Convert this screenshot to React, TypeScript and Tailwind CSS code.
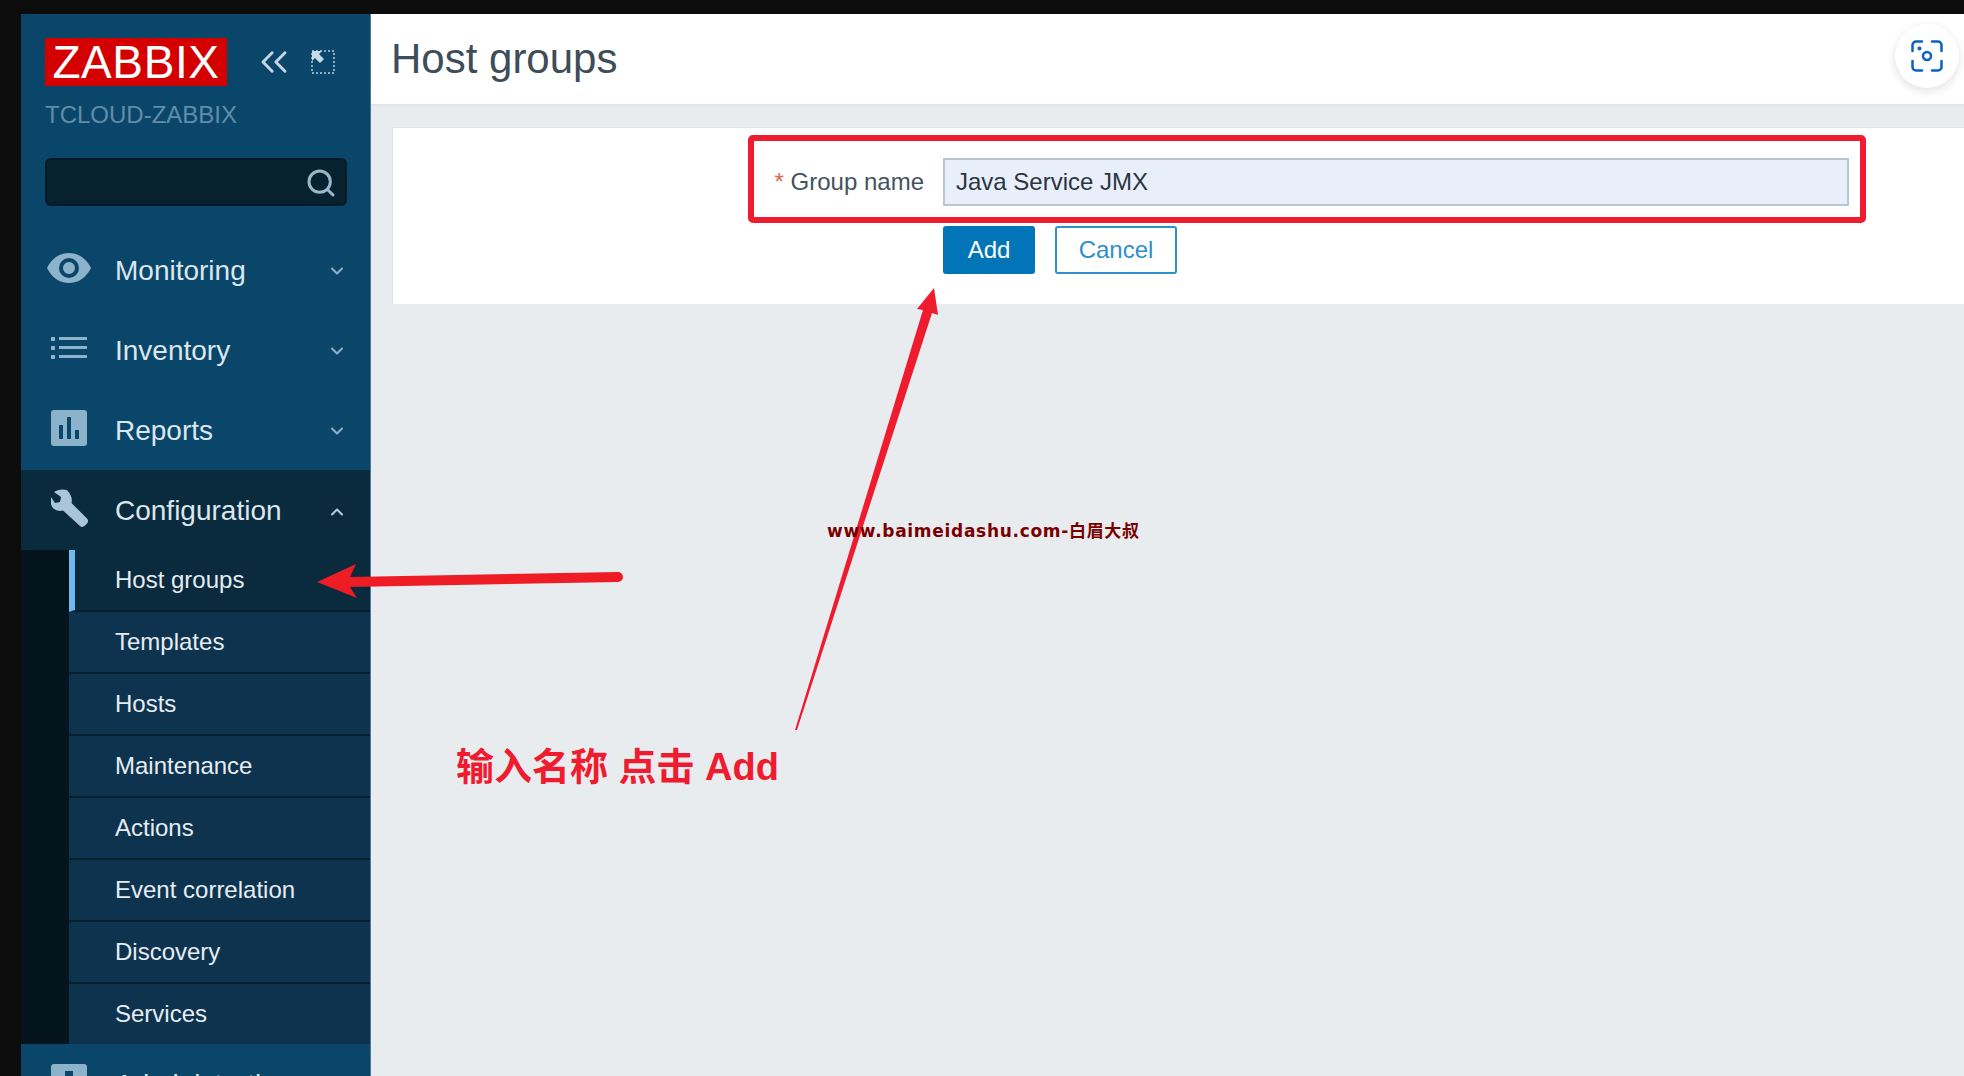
import { ChevronDown, ChevronUp, ChevronsLeft, Search } from "lucide-react";

const sans = "font-['Liberation_Sans',Arial,sans-serif]";

function EyeIcon() {
  return (
    <svg width="44" height="32" viewBox="0 0 44 32" className="text-[#8db3cb]">
      <path
        fill="currentColor"
        fillRule="evenodd"
        d="M0 16C5 6 13 1 22 1s17 5 22 15c-5 10-13 15-22 15S5 26 0 16zm22-10a10 10 0 1 0 0 20 10 10 0 0 0 0-20zm0 4a6 6 0 1 1 0 12 6 6 0 0 1 0-12z"
      />
    </svg>
  );
}

function ListIcon() {
  return (
    <svg width="36" height="22" viewBox="0 0 36 22" className="text-[#8db3cb]">
      <path
        fill="currentColor"
        d="M0 0h4v4H0zM8 0h28v3H8zM0 9h4v4H0zM8 9h28v3H8zM0 18h4v4H0zM8 18h28v3H8z"
      />
    </svg>
  );
}

function ReportIcon() {
  return (
    <svg width="36" height="36" viewBox="0 0 36 36" className="text-[#8db3cb]">
      <path
        fill="currentColor"
        fillRule="evenodd"
        d="M3 0h30a3 3 0 0 1 3 3v30a3 3 0 0 1-3 3H3a3 3 0 0 1-3-3V3a3 3 0 0 1 3-3zm5 15v14h4V15zm8-8v22h4V7zm8 13v9h4v-9z"
      />
    </svg>
  );
}

function WrenchIcon() {
  return (
    <svg width="38" height="38" viewBox="0 0 38 38" className="text-[#a8c6d8]">
      <path
        fill="currentColor"
        d="M16 1c-5-1.500-10 0-13 2l7 5-1 5-5 1-4-6c-1 4-.5 8 2 11 3 3 7 3.500 10 2.500L29 37c1.500 1.500 3.500 1 5-.5l2-2c1.500-1.500 1.500-3.500 0-5L20.500 14c1-4 0-8-4.500-13z"
      />
    </svg>
  );
}

function AdminIcon() {
  return (
    <svg width="36" height="36" viewBox="0 0 36 36" className="text-[#8db3cb]">
      <path
        fill="currentColor"
        fillRule="evenodd"
        d="M3 0h30a3 3 0 0 1 3 3v30a3 3 0 0 1-3 3H3a3 3 0 0 1-3-3V3a3 3 0 0 1 3-3zm11 7v5H6v18h24V12h-8V7z"
      />
    </svg>
  );
}

function ExpandIcon() {
  return (
    <svg width="24" height="24" viewBox="0 0 24 24">
      <rect x="1" y="1" width="22" height="22" fill="none" stroke="#b9cfdd" strokeWidth="1.500" strokeDasharray="2 2" />
      <path fill="#c8dae6" d="M1 1h10L8 4l5 5-4 4-5-5-3 3z" />
    </svg>
  );
}

function ScanIcon() {
  return (
    <svg width="32" height="32" viewBox="0 0 32 32" fill="none" stroke="#0b62c4" strokeWidth="2.500" strokeLinecap="round">
      <path d="M11 1.500H5A3.500 3.500 0 0 0 1.500 5v6M21 1.500h6A3.500 3.500 0 0 1 30.500 5v6M1.500 21v6A3.500 3.500 0 0 0 5 30.500h6M30.500 21v6a3.500 3.500 0 0 1-3.500 3.500h-6" />
      <circle cx="16" cy="16" r="4" />
      <circle cx="8.500" cy="8.500" r="0.800" fill="#0b62c4" />
    </svg>
  );
}

const topNav = [
  { label: "Monitoring", icon: <EyeIcon />, iconPad: "pl-[26px]" },
  { label: "Inventory", icon: <ListIcon />, iconPad: "pl-[30px]" },
  { label: "Reports", icon: <ReportIcon />, iconPad: "pl-[30px]" },
];

const subNav = [
  "Host groups",
  "Templates",
  "Hosts",
  "Maintenance",
  "Actions",
  "Event correlation",
  "Discovery",
  "Services",
];

function NavRow({
  label,
  icon,
  open,
  iconPad = "pl-[30px]",
}: {
  label: string;
  icon: React.ReactNode;
  open?: boolean;
  iconPad?: string;
}) {
  return (
    <div className={`relative flex h-20 shrink-0 items-center ${open ? "bg-[#0a2a3d]" : ""}`}>
      <div className={`flex w-[94px] shrink-0 items-center pb-1 ${iconPad}`}>{icon}</div>
      <span className="flex-1 pt-[2px] text-[28px] text-[#dbe6ed]">{label}</span>
      {open ? (
        <ChevronUp className="mr-[23px] mt-1 h-5 w-5 text-[#b5cbd9]" strokeWidth={2.5} />
      ) : (
        <ChevronDown className="mr-[23px] mt-[2px] h-5 w-5 text-[#8fb0c6]" strokeWidth={2.5} />
      )}
    </div>
  );
}

function Sidebar() {
  return (
    <aside className="flex w-[350px] shrink-0 flex-col border-r border-[#4d7a99] bg-[#0a466a]">
      <div className="h-[216px] shrink-0 pl-6 pr-[23px] pt-6">
        <div className="flex items-center">
          <div className="flex h-12 w-[182px] items-center justify-center bg-[#d40000] text-[46px] leading-none tracking-[0.6px] text-white">
            ZABBIX
          </div>
          <ChevronsLeft className="ml-[25px] h-11 w-11 text-[#c4d6e2]" strokeWidth={1.6} />
          <div className="ml-[15px]">
            <ExpandIcon />
          </div>
        </div>
        <div className="mt-[15px] text-[24px] leading-[28px] text-[#618da8]">TCLOUD-ZABBIX</div>
        <div className="mt-[29px] flex h-12 items-center justify-end rounded-md border-2 border-[#041a27] bg-[#08212f] pr-2">
          <Search className="mt-[2px] h-8 w-8 text-[#9ab8ca]" strokeWidth={2.25} />
        </div>
      </div>
      {topNav.map((item) => (
        <NavRow key={item.label} label={item.label} icon={item.icon} iconPad={item.iconPad} />
      ))}
      <NavRow label="Configuration" icon={<WrenchIcon />} open />
      <div className="flex shrink-0 bg-[#04141d]">
        <div className="w-12 shrink-0" />
        <div className="flex-1">
          {subNav.map((name, i) => (
            <div
              key={name}
              className={`flex items-center text-[24px] text-[#e6edf2] ${
                i === 0
                  ? "h-[62px] border-b-2 border-l-[6px] border-[#06202f] border-l-[#6fb9ec] bg-[#0a2a3d] pl-10"
                  : i === subNav.length - 1
                    ? "h-[60px] bg-[#0e334e] pl-[46px]"
                    : "h-[62px] border-b-2 border-[#06202f] bg-[#0e334e] pl-[46px]"
              }`}
            >
              {name}
            </div>
          ))}
        </div>
      </div>
      <NavRow label="Administration" icon={<AdminIcon />} />
    </aside>
  );
}

function Annotations() {
  return (
    <>
      <svg className="pointer-events-none absolute inset-0" width="1964" height="1076">
        <rect x="751" y="138" width="1112" height="82" rx="2" fill="none" stroke="#ee1c2e" strokeWidth="6" />
        <path fill="#ee1c25" d="M317 582 356 564 350 577 618 572a5 5 0 0 1 0 10L350 587 357 598z" />
        <path fill="#ee1c2e" d="M934 288 938 315 932 313 797 730 795 730 923 310 917 309z" />
      </svg>
      <div className="absolute left-[827px] top-[519px] whitespace-nowrap font-['DejaVu_Sans','Noto_Sans_CJK_SC',sans-serif] text-[17px] font-bold leading-6 tracking-[0.7px] text-[#7a0000]">
        www.baimeidashu.com-白眉大叔
      </div>
      <div className="absolute left-[456px] top-[742px] whitespace-nowrap font-['Liberation_Sans','Noto_Sans_CJK_SC',sans-serif] text-[38px] font-bold leading-[50px] text-[#ee1c2e]">
        输入名称 点击 Add
      </div>
      <div className="absolute left-[1895px] top-6 flex h-16 w-16 items-center justify-center rounded-full bg-white shadow-[0_3px_10px_rgba(0,0,0,0.12)]">
        <ScanIcon />
      </div>
    </>
  );
}

export default function App() {
  return (
    <div className={`relative flex h-screen overflow-hidden bg-[#0c0c0c] pl-[21px] pt-[14px] ${sans}`}>
      <Sidebar />
      <main className="min-w-0 flex-1 bg-[#e9ecef]">
        <header className="flex h-[92px] items-center border-b-2 border-[#e2e5e8] bg-white pl-[20px]">
          <h1 className="text-[42px] font-normal leading-none text-[#3f4d59]">Host groups</h1>
        </header>
        <section className="ml-[21px] mt-[21px] h-[177px] border-l border-t border-[#e2e5e8] bg-white pt-[30px]">
          <div className="grid grid-cols-[531px_906px] items-center gap-x-[19px] gap-y-5">
            <label className="text-right text-[24px] text-[#44525f]">
              <span className="text-[#e0644f]">*</span> Group name
            </label>
            <div className="flex h-12 items-center border-2 border-[#b9c6d0] bg-[#e8effb] pl-[11px] text-[24px] text-[#2b3540]">
              Java Service JMX
            </div>
            <div />
            <div className="flex gap-5">
              <button className="flex h-12 w-[92px] items-center justify-center rounded-[3px] bg-[#0275b8] text-[24px] text-white">
                Add
              </button>
              <button className="flex h-12 w-[122px] items-center justify-center rounded-[3px] border-2 border-[#2f8fc9] bg-white text-[24px] text-[#2f8fc9]">
                Cancel
              </button>
            </div>
          </div>
        </section>
      </main>
      <Annotations />
    </div>
  );
}
